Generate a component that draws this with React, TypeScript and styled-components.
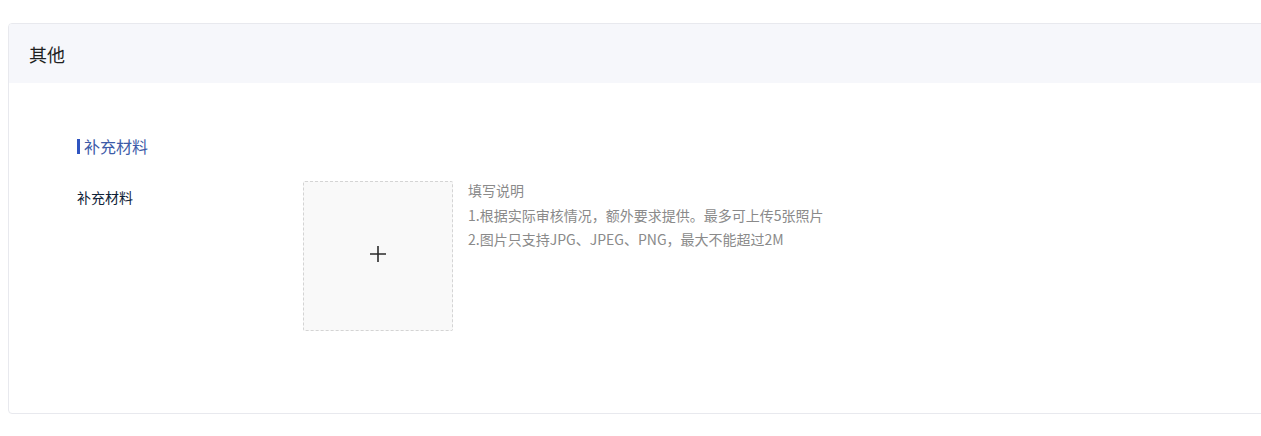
import React from "react";
import styled, { createGlobalStyle } from "styled-components";

const GlobalStyle = createGlobalStyle`
  html, body {
    margin: 0;
    padding: 0;
    background: #ffffff;
    overflow: hidden;
  }
  body {
    font-family: "Noto Sans CJK SC", "Noto Sans", sans-serif;
  }
`;

const Page = styled.div`
  padding: 23px 0 0 8px;
  width: 1261px;
  height: 436px;
  box-sizing: border-box;
  overflow: hidden;
`;

const Card = styled.section`
  width: 1270px;
  height: 391px;
  box-sizing: border-box;
  border: 1px solid #e8e9ee;
  border-radius: 4px;
  background: #ffffff;
  overflow: hidden;
`;

const CardHeader = styled.div`
  height: 59px;
  background: #f6f7fb;
  display: flex;
  align-items: center;
  padding-left: 20px;
  font-size: 18px;
  line-height: 20px;
  color: #1f1f1f;
`;

const CardBody = styled.div`
  padding: 55px 0 0 68px;
`;

const SectionTitle = styled.div`
  display: flex;
  align-items: center;
  gap: 4px;
  font-size: 16px;
  line-height: 16px;
  color: #3d5ba8;
  height: 16px;
  &::before {
    content: "";
    width: 3px;
    height: 15px;
    background: #2f54c0;
  }
`;

const FormRow = styled.div`
  display: flex;
  margin-top: 27px;
`;

const Label = styled.div`
  width: 226px;
  font-size: 14px;
  line-height: 16px;
  color: #0f2338;
  padding-top: 8px;
`;

const Uploader = styled.div`
  width: 150px;
  height: 150px;
  box-sizing: border-box;
  border: 1px dashed #d4d4d4;
  background: #f9f9f9;
  border-radius: 2px;
  display: flex;
  align-items: center;
  justify-content: center;
  cursor: pointer;
`;

const Tips = styled.div`
  margin-left: 15px;
  margin-top: -3px;
  font-size: 14px;
  line-height: 24.5px;
  color: #8a8a8a;
`;

const PlusIcon = () => (
  <svg width="18" height="18" viewBox="0 0 18 18" style={{ marginTop: -4 }}>
    <path d="M9 1v16M1 9h16" stroke="#2b2b2b" strokeWidth="1.6" fill="none" />
  </svg>
);

export default function App() {
  return (
    <>
      <GlobalStyle />
      <Page>
        <Card>
          <CardHeader>其他</CardHeader>
          <CardBody>
            <SectionTitle>补充材料</SectionTitle>
            <FormRow>
              <Label>补充材料</Label>
              <Uploader>
                <PlusIcon />
              </Uploader>
              <Tips>
                <div>填写说明</div>
                <div>1.根据实际审核情况，额外要求提供。最多可上传5张照片</div>
                <div>2.图片只支持JPG、JPEG、PNG，最大不能超过2M</div>
              </Tips>
            </FormRow>
          </CardBody>
        </Card>
      </Page>
    </>
  );
}
